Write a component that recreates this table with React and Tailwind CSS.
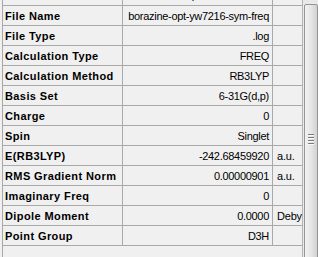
const rows = [
  { label: "File Name", value: "borazine-opt-yw7216-sym-freq" },
  { label: "File Type", value: ".log" },
  { label: "Calculation Type", value: "FREQ" },
  { label: "Calculation Method", value: "RB3LYP" },
  { label: "Basis Set", value: "6-31G(d,p)" },
  { label: "Charge", value: "0" },
  { label: "Spin", value: "Singlet" },
  { label: "E(RB3LYP)", value: "-242.68459920", unit: "a.u." },
  { label: "RMS Gradient Norm", value: "0.00000901", unit: "a.u." },
  { label: "Imaginary Freq", value: "0" },
  { label: "Dipole Moment", value: "0.0000", unit: "Debye" },
  { label: "Point Group", value: "D3H" },
];

const font = { fontFamily: '"Liberation Sans", Arial, sans-serif' };

const PropRow = ({ label, value, unit }) => (
  <div className="flex h-[20px] border-b border-[#a9a9a9] text-[11px] leading-[20px] text-black">
    <div className="w-[120px] shrink-0 border-r border-[#a9a9a9] pl-[2px] font-bold tracking-[0.4px] whitespace-nowrap overflow-hidden">
      {label}
    </div>
    <div className="w-[150px] shrink-0 border-r border-[#a9a9a9] pr-[3px] text-right tracking-[-0.3px] whitespace-nowrap overflow-hidden">
      {value}
    </div>
    <div className="w-[29px] shrink-0 pl-[4px] tracking-[-0.2px] whitespace-nowrap overflow-hidden">
      {unit}
    </div>
  </div>
);

const Scrollbar = () => (
  <div className="w-[16px] h-full shrink-0 bg-[#e9e9e9] border-l border-[#b5b5b5] pt-[4px] pl-px">
    <div className="h-[270px] rounded-[2px] border border-[#969696] bg-gradient-to-r from-[#f2f2f2] via-[#e6e6e6] to-[#d2d2d2] flex flex-col items-center justify-center gap-px">
      {[0, 1, 2, 3].map((i) => (
        <div key={i} className="w-[6px] h-px bg-[#7a7a7a] border-b border-[#fafafa] box-content" />
      ))}
    </div>
  </div>
);

export default function App() {
  return (
    <div className="w-[318px] h-[257px] bg-[#f0f0f0] flex overflow-hidden" style={font}>
      <div className="w-[302px] h-full shrink-0 pl-[2px]">
        <div className="h-full border-l border-[#a9a9a9]">
          {/* row scrolled mostly out of view */}
          <div className="flex h-[6px] border-b border-[#a9a9a9] text-[11px] leading-[14px] overflow-hidden">
            <div className="w-[120px] shrink-0 border-r border-[#a9a9a9]" />
            <div className="w-[150px] shrink-0 border-r border-[#a9a9a9] overflow-hidden">
              <div className="mt-[-12px] pl-[52px] tracking-[-0.3px] whitespace-nowrap">Output</div>
            </div>
          </div>
          {rows.map((r) => (
            <PropRow key={r.label} {...r} />
          ))}
        </div>
      </div>
      <Scrollbar />
    </div>
  );
}
